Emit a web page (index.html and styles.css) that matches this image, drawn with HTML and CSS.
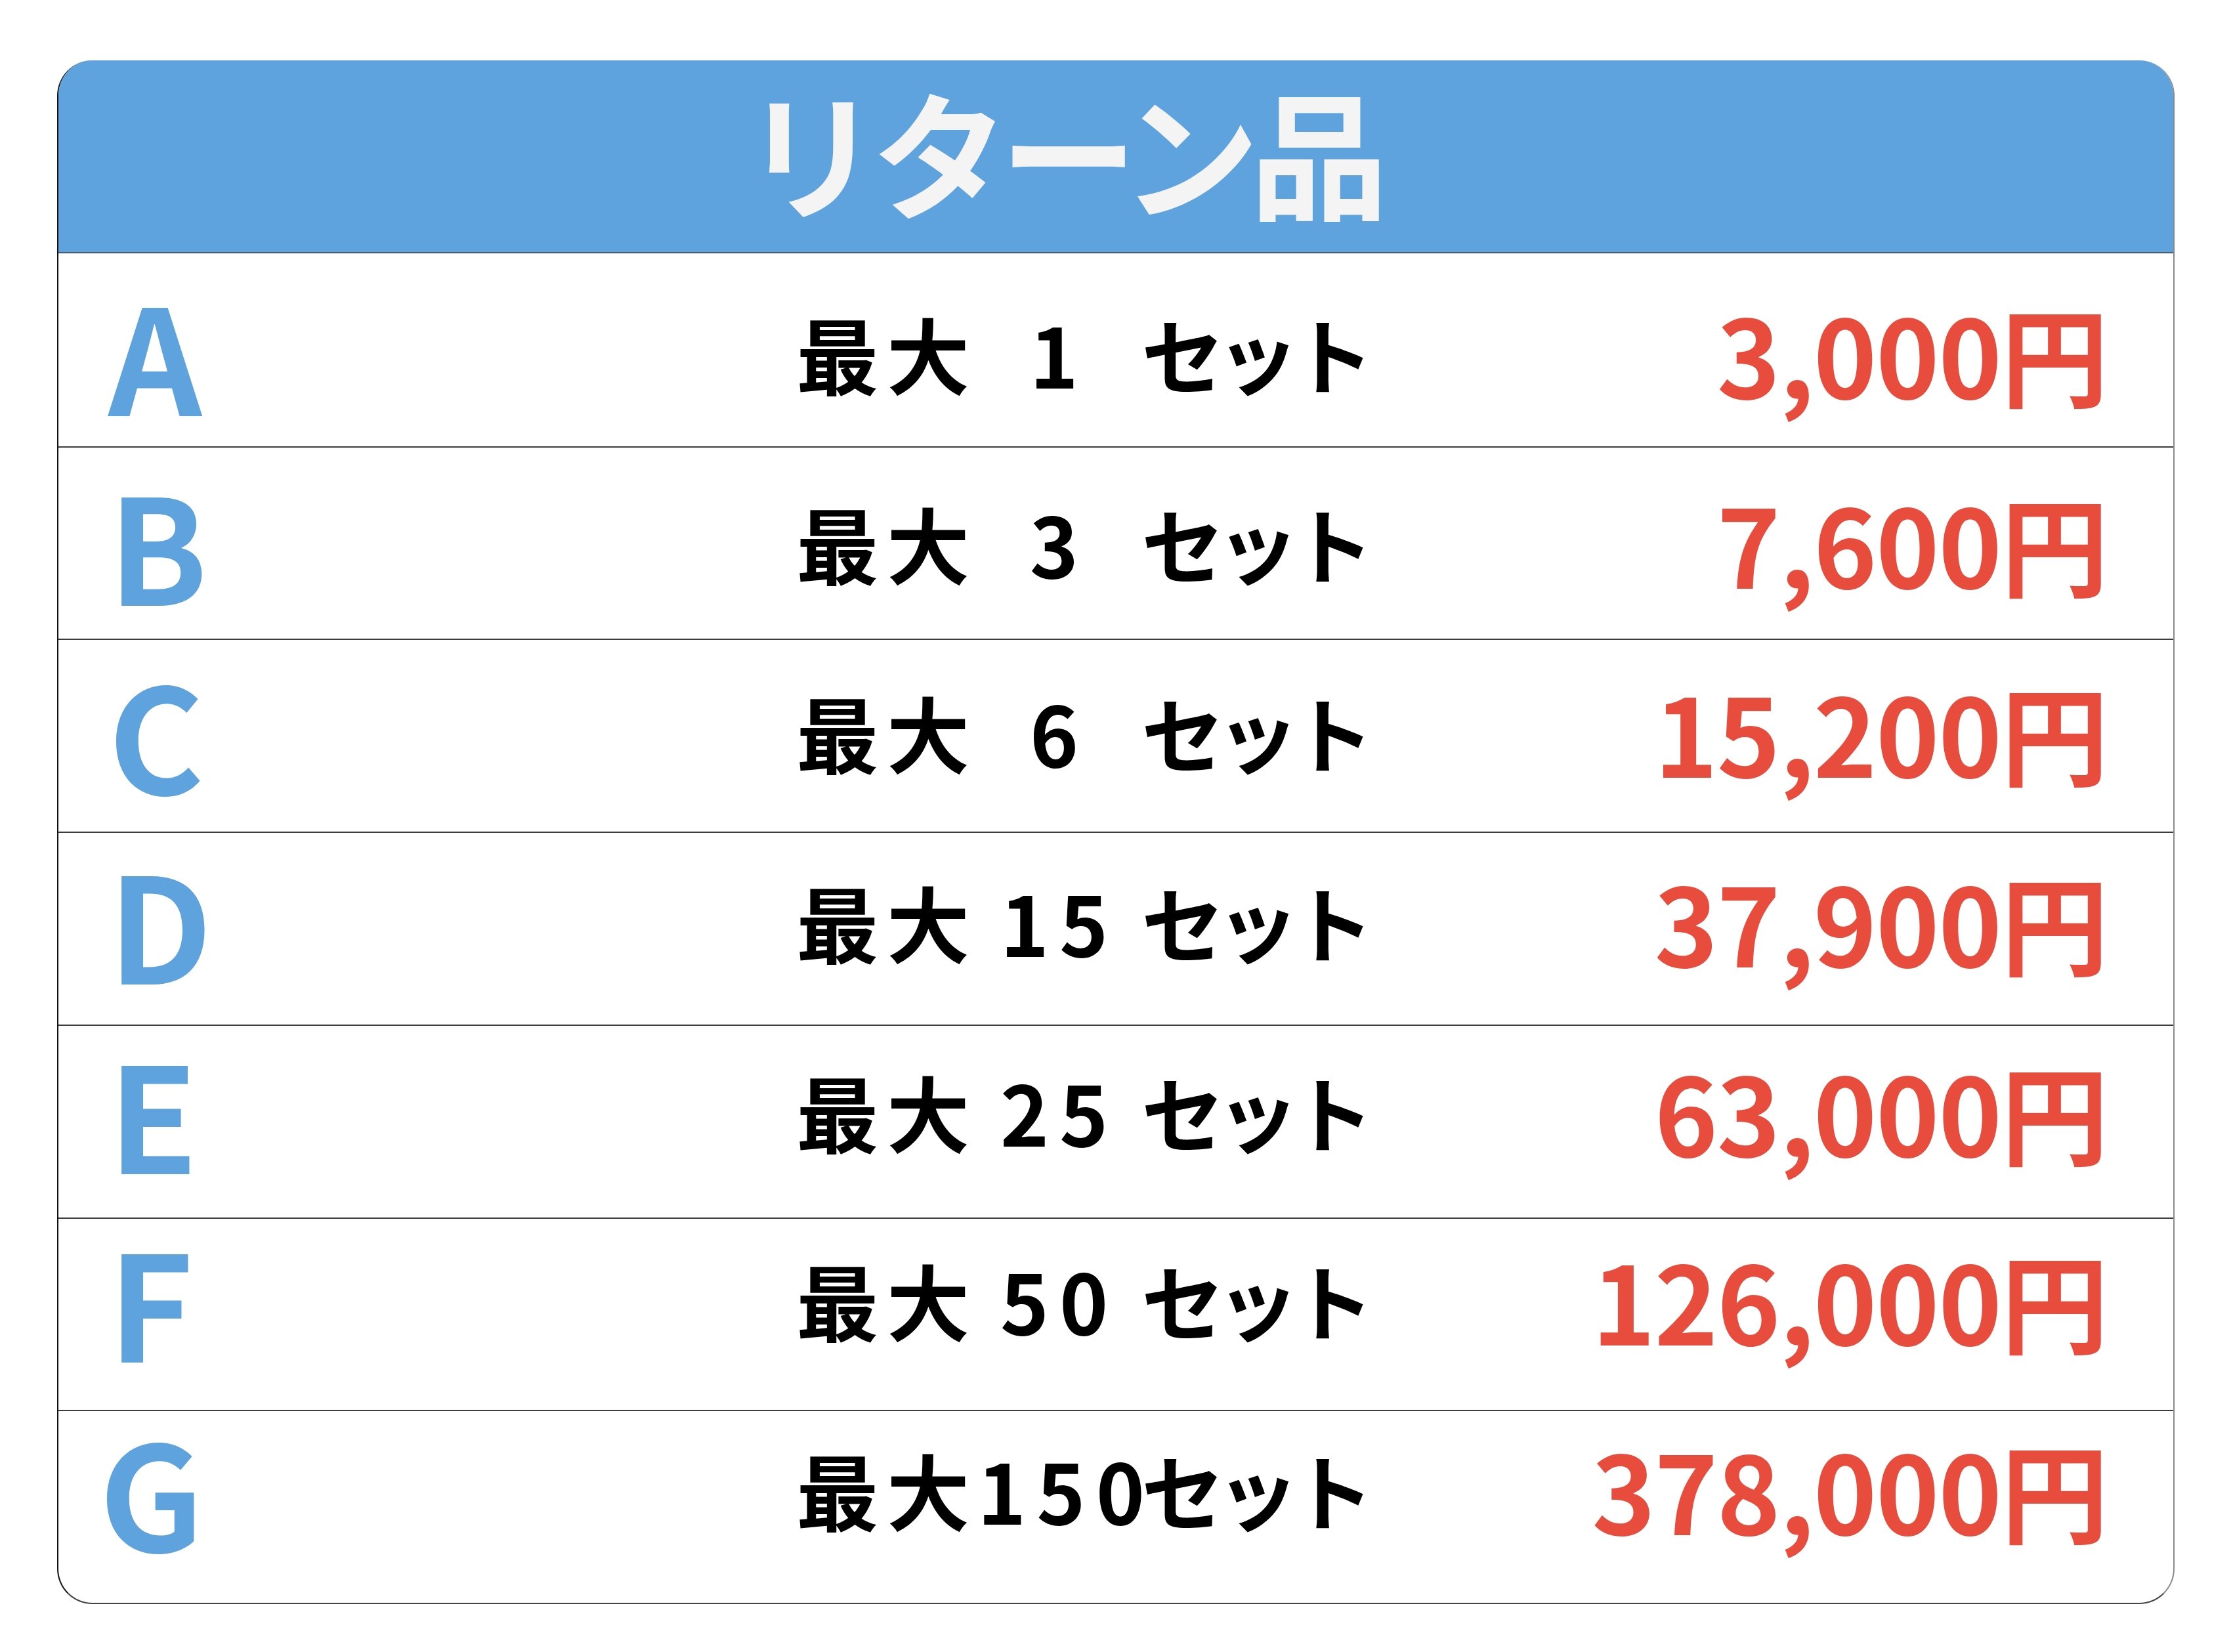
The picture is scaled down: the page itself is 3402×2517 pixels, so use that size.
FILE: index.html
```html
<!DOCTYPE html>
<html lang="ja">
<head>
<meta charset="utf-8">
<title>リターン品</title>
<link rel="stylesheet" href="styles.css">
</head>
<body>
<div class="table">
  <div class="header"><span class="title">リターン品</span></div>
  <div class="row r1"><span class="grade">A</span><span class="desc"><span class="kanji">最大</span><span class="num">1</span><span class="kana">セット</span></span><span class="price">3,000円</span></div>
  <div class="row r2"><span class="grade">B</span><span class="desc"><span class="kanji">最大</span><span class="num">3</span><span class="kana">セット</span></span><span class="price">7,600円</span></div>
  <div class="row r3"><span class="grade">C</span><span class="desc"><span class="kanji">最大</span><span class="num">6</span><span class="kana">セット</span></span><span class="price">15,200円</span></div>
  <div class="row r4"><span class="grade">D</span><span class="desc"><span class="kanji">最大</span><span class="num">15</span><span class="kana">セット</span></span><span class="price">37,900円</span></div>
  <div class="row r5"><span class="grade">E</span><span class="desc"><span class="kanji">最大</span><span class="num">25</span><span class="kana">セット</span></span><span class="price">63,000円</span></div>
  <div class="row r6"><span class="grade">F</span><span class="desc"><span class="kanji">最大</span><span class="num">50</span><span class="kana">セット</span></span><span class="price">126,000円</span></div>
  <div class="row r7"><span class="grade">G</span><span class="desc"><span class="kanji">最大</span><span class="num">150</span><span class="kana">セット</span></span><span class="price">378,000円</span></div>
</div>
</body>
</html>
```

FILE: styles.css
```css
html, body {
  margin: 0;
  padding: 0;
  background: #ffffff;
}

body {
  padding: 92px 0 0 87px;
  font-family: "Noto Sans CJK JP", "Noto Sans", sans-serif;
  font-weight: 700;
}

.table {
  box-sizing: border-box;
  width: 3226px;
  height: 2352px;
  border-left: 2px solid #111111;
  border-right: 2px solid #8a8a8a;
  border-bottom: 2px solid #444444;
  border-radius: 54px;
  overflow: hidden;
  display: flex;
  flex-direction: column;
  background: #ffffff;
}

.header {
  box-sizing: border-box;
  height: 294px;
  margin-left: -2px;
  margin-right: -2px;
  background: #5fa3de;
  border-bottom: 2px solid #4a5c6e;
  display: flex;
  align-items: center;
  justify-content: center;
  padding-right: 168px;
  padding-bottom: 22px;
}

.title {
  color: #f4f4f4;
  font-size: 210px;
  line-height: 1;
  letter-spacing: -14px;
}

.row {
  --dy: 0px;
  box-sizing: border-box;
  height: 294px;
  display: flex;
  align-items: center;
  border-top: 2px solid #3c3c3c;
  line-height: 1;
}

.row > span {
  transform: translateY(var(--dy));
}

.r1 { border-top: none; --dy: 4px; }
.r2 { --dy: -1px; }
.r3 { --dy: -7px; }
.r4 { --dy: -12px; }
.r5 { --dy: -17px; }
.r6 { --dy: -23px; }
.r7 { --dy: -28px; }

.grade {
  box-sizing: border-box;
  width: 1124px;
  padding-left: 76px;
  color: #5fa3de;
  font-size: 222px;
}

.r7 .grade {
  padding-left: 62px;
}

.desc {
  display: flex;
  align-items: baseline;
  color: #000000;
  font-size: 126px;
  letter-spacing: 12px;
}

.num {
  display: inline-block;
  width: 250px;
  text-align: center;
  letter-spacing: 16px;
}

.kana {
  letter-spacing: -12px;
}

.price {
  flex: 1;
  text-align: right;
  padding-right: 100px;
  color: #e74c3c;
  font-size: 164px;
  letter-spacing: -1.5px;
}
```
